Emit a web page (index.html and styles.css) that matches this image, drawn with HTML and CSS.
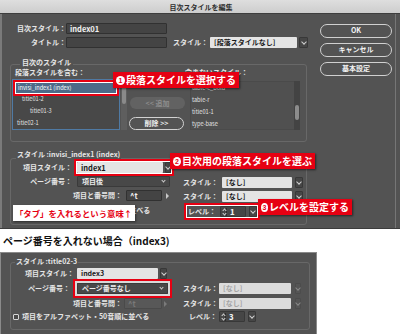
FILE: index.html
```html
<!DOCTYPE html>
<html lang="ja">
<head>
<meta charset="utf-8">
<link rel="stylesheet" href="styles.css">
</head>
<body>
<div class="dlg">
  <div class="titlebar">目次スタイルを編集</div>
  <div class="dbody">
    <div class="main">
      <div class="row r1">
        <span class="lbl lw54">目次スタイル：</span>
        <span class="inp iw101">index01</span>
      </div>
      <div class="row r2">
        <span class="lbl lw54">タイトル：</span>
        <span class="inp iw101"></span>
        <span class="lbl lw35 ml6">スタイル：</span>
        <span class="sel light sw87 ml2">[段落スタイルなし]</span>
        <span class="arr aw9 ml2"></span>
      </div>

      <div class="group g1">
        <span class="legend">目次のスタイル</span>
        <div class="lblrow">
          <span class="lbl incl">段落スタイルを含む：</span>
          <span class="lbl">含まないスタイル：</span>
        </div>
        <div class="lists">
          <div class="listwrap lwrap">
            <ul class="listbox">
              <li class="item selitem">invisi_index1 (index)</li>
              <li class="item ind2">title01-2</li>
              <li class="item ind3">title01-3</li>
              <li class="item ind1">title02-1</li>
            </ul>
            <div class="scroll ls"><div class="thumb lthumb"></div></div>
          </div>
          <div class="mid">
            <div class="btn dis">&lt;&lt; 追加</div>
            <div class="btn del">削除 &gt;&gt;</div>
          </div>
          <div class="listwrap rwrap">
            <ul class="rbox">
              <li class="item">table-c_bold</li>
              <li class="item">table-r</li>
              <li class="item">title01-1</li>
              <li class="item">type-base</li>
            </ul>
            <div class="scroll rs"><div class="thumb rthumb"></div></div>
          </div>
        </div>
      </div>

      <div class="group g2">
        <span class="legend leg2">スタイル :invisi_index1 (index)</span>
        <div class="gbody">
          <div class="lcol">
            <div class="row">
              <span class="lbl lw61">項目スタイル：</span>
              <span class="hl hl1 ml5">
                <span class="sel light sw86 bold">index1</span>
                <span class="arr aw6 ml2"></span>
              </span>
            </div>
            <div class="row mt3">
              <span class="lbl lw61">ページ番号：</span>
              <span class="sel dark sw93 ml5">項目後<i class="chev"></i></span>
            </div>
            <div class="row mt3">
              <span class="lbl lw111">項目と番号間：</span>
              <span class="inp iw36 ml4">^t</span>
              <span class="tri ml4"></span>
            </div>
            <div class="row mt4">
              <span class="cb ml3"></span>
              <span class="lbl ml3">項目をアルファベット・50音順に並べる</span>
            </div>
          </div>
          <div class="rcol">
            <div class="row">
              <span class="lbl lw35">スタイル：</span>
              <span class="sel light sw70 ml4">[なし]</span>
              <span class="arr aw8 ml3"></span>
            </div>
            <div class="row mt3">
              <span class="lbl lw35">スタイル：</span>
              <span class="sel light sw70 ml4">[なし]</span>
              <span class="arr aw8 ml3"></span>
            </div>
            <div class="row mt4">
              <span class="hl hl3 ml4">
                <span class="lbl lw29">レベル：</span>
                <span class="step ml4"><i class="updown"></i><b>1</b></span>
                <span class="arr aw8 ml3"></span>
              </span>
            </div>
          </div>
        </div>
      </div>
    </div>

    <div class="side">
      <div class="btn pill">OK</div>
      <div class="btn pill">キャンセル</div>
      <div class="btn pill">基本設定</div>
    </div>
  </div>

  <div class="callout c1"><span class="num">1</span>段落スタイルを選択する</div>
  <div class="callout c2"><span class="num">2</span>目次用の段落スタイルを選ぶ</div>
  <div class="callout c3"><span class="num">3</span>レベルを設定する</div>
  <div class="note">「タブ」を入れるという意味↑</div>
</div>

<div class="heading">ページ番号を入れない場合（index3)</div>

<div class="dlg2">
  <div class="group g3">
    <span class="legend leg3">スタイル :title02-3</span>
    <div class="gbody">
      <div class="lcol lcol3">
        <div class="row">
          <span class="lbl lw63">項目スタイル：</span>
          <span class="sel light sw81 ml3">index3</span>
          <span class="arr aw7 ml2"></span>
        </div>
        <div class="row mt4">
          <span class="lbl lw59">ページ番号：</span>
          <span class="hl hl2 ml7">
            <span class="sel dark sw91">ページ番号なし<i class="chev"></i></span>
          </span>
        </div>
        <div class="row mt4">
          <span class="lbl lw111">項目と番号間：</span>
          <span class="inp iw38 ml2 off">^t</span>
          <span class="tri ml2 offtri"></span>
        </div>
        <div class="row mt2">
          <span class="cb ml2"></span>
          <span class="lbl ml3">項目をアルファベット・50音順に並べる</span>
        </div>
      </div>
      <div class="rcol rcol3">
        <div class="row">
          <span class="lbl lw34">スタイル：</span>
          <span class="sel light sw72 ml2 off">[なし]</span>
          <span class="arr aw6 ml4 offarr"></span>
        </div>
        <div class="row mt4">
          <span class="lbl lw34">スタイル：</span>
          <span class="sel light sw72 ml2 off">[なし]</span>
          <span class="arr aw6 ml4 offarr"></span>
        </div>
        <div class="row mt2">
          <span class="lbl lw34">レベル：</span>
          <span class="step sw26 ml2"><i class="updown"></i><b>3</b></span>
          <span class="arr aw8 ml3"></span>
        </div>
      </div>
    </div>
  </div>
</div>
</body>
</html>
```

FILE: styles.css
```css
* { box-sizing: border-box; margin: 0; padding: 0; }
html, body { width: 400px; height: 334px; overflow: hidden; background: #fff; }
body {
  font-family: "Noto Sans CJK JP", "Noto Sans", sans-serif;
  color: #e8e8e8;
  font-size: 7px;
  line-height: 11px;
}
ul { list-style: none; }
i, b { font-style: normal; }

/* ===== top dialog ===== */
.dlg {
  position: relative;
  height: 229px;
  background: linear-gradient(to right, transparent 395px, #767676 395px, #767676 396px, transparent 396px), #535353;
  box-shadow: inset 2px 0 0 #7a7a7a;
  overflow: hidden;
  border-bottom: 1px solid #3c3c3c;
}
.titlebar {
  height: 14px;
  background: linear-gradient(#dedede, #cdcdcd);
  border-bottom: 1px solid #3e3e3e;
  color: #2e2e2e;
  font-weight: bold;
  font-size: 7px;
  line-height: 14px;
  text-align: center;
  padding-left: 2px;
}
.dbody { display: flex; }
.main { margin-left: 10px; width: 300px; }
.side { margin-left: 10px; width: 72px; padding-top: 10px; display: flex; flex-direction: column; gap: 5px; }

.row { display: flex; align-items: center; height: 11px; }
.r1 { margin-top: 9px; }
.r2 { margin-top: 3px; }
.mt2 { margin-top: 2px; }
.mt3 { margin-top: 3px; }
.mt4 { margin-top: 4px; }
.ml2 { margin-left: 2px; }
.ml3 { margin-left: 3px; }
.ml4 { margin-left: 4px; }
.ml5 { margin-left: 5px; }
.ml6 { margin-left: 6px; }
.ml7 { margin-left: 7px; }

.lbl { flex: none; text-align: right; white-space: nowrap; font-weight: bold; color: #e6e6e6; }
.lw29 { width: 29px; }
.lw34 { width: 34px; }
.lw35 { width: 35px; }
.lw54 { width: 56px; }
.lw59 { width: 59px; }
.lw61 { width: 61px; }
.lw63 { width: 63px; }
.lw111 { width: 111px; }

.inp {
  flex: none;
  height: 11px;
  background: #444;
  border: 1px solid #313131;
  border-radius: 1px;
  padding-left: 3px;
  color: #f2f2f2;
  font-size: 7.5px;
  line-height: 9px;
  font-weight: bold;
}
.iw101 { width: 101px; }
.iw36 { width: 36px; }
.iw38 { width: 38px; }
.inp.off { background: #585858; border-color: #4a4a4a; color: #7a7a7a; }

.sel {
  flex: none;
  position: relative;
  height: 11px;
  border-radius: 1px;
  padding-left: 4px;
  font-size: 7px;
  line-height: 11px;
  font-weight: bold;
  white-space: nowrap;
}
.sel.light { background: #e4e4e4; color: #1a1a1a; }
.sel.light.off { background: #dcdcdc; color: #a4a4a4; }
.sel.dark { background: #484848; border: 1px solid #3a3a3a; color: #ececec; line-height: 9px; }
.sw26 { width: 26px; }
.sw70 { width: 70px; }
.sw72 { width: 72px; }
.sw81 { width: 81px; }
.sw86 { width: 86px; }
.sw87 { width: 87px; }
.sw91 { width: 91px; }
.sw93 { width: 93px; }
.bold { font-size: 7.5px; }

.chev {
  position: absolute;
  right: 4px;
  top: 2px;
  width: 3px;
  height: 3px;
  border-right: 1px solid #cfcfcf;
  border-bottom: 1px solid #cfcfcf;
  transform: rotate(45deg);
}
.arr {
  flex: none;
  height: 11px;
  background: #464646;
  border: 1px solid #383838;
  border-radius: 1px;
  display: flex;
  align-items: center;
  justify-content: center;
}
.arr::after {
  content: "";
  width: 3px;
  height: 3px;
  margin-top: -2px;
  border-right: 1px solid #d0d0d0;
  border-bottom: 1px solid #d0d0d0;
  transform: rotate(45deg);
}
.aw6 { width: 6px; }
.aw7 { width: 7px; }
.aw8 { width: 8px; }
.aw9 { width: 9px; }
.offarr { background: #555; border-color: #4c4c4c; }
.offarr::after { border-color: #888; }

.tri {
  flex: none;
  width: 0; height: 0;
  border-top: 3px solid transparent;
  border-bottom: 3px solid transparent;
  border-left: 3px solid #c8c8c8;
}
.offtri { border-left-color: #7a7a7a; }

.cb { flex: none; width: 6px; height: 6px; border: 1px solid #d6d6d6; border-radius: 1px; background: #4a4a4a; }

.step {
  flex: none;
  display: flex;
  align-items: center;
  width: 26px;
  height: 11px;
  background: #464646;
  border: 1px solid #383838;
  border-radius: 1px;
  color: #f0f0f0;
  font-weight: bold;
  font-size: 7.5px;
  line-height: 9px;
}
.step b { margin-left: 3px; }
.updown {
  position: relative;
  width: 5px;
  height: 8px;
  margin-left: 1px;
  border-right: 1px solid #2d2d2d;
}
.updown::before, .updown::after {
  content: "";
  position: absolute;
  left: 1px;
  width: 2px;
  height: 2px;
  border-left: 1px solid #d0d0d0;
  border-top: 1px solid #d0d0d0;
}
.updown::before { top: 1px; transform: rotate(45deg); }
.updown::after { top: 4px; transform: rotate(225deg); }

/* highlight frames */
.hl { display: flex; align-items: center; flex: none; }
.hl1, .hl3 {
  outline: 2px solid #e60012;
  outline-offset: 1px;
  box-shadow: 0 0 0 1px #ffffff;
}
.hl2 {
  outline: 2px solid #e60012;
  outline-offset: 2px;
  box-shadow: 0 0 0 2px #d9d9d9;
}

/* groups */
.group { border: 1px solid #686868; border-radius: 3px; }
.legend {
  display: block;
  width: max-content;
  margin-top: -7px;
  margin-left: 9px;
  padding: 0 2px;
  background: #535353;
  line-height: 9px;
  font-weight: bold;
  color: #e6e6e6;
}
.g1 { margin-top: 16px; width: 297px; height: 78px; }
.lblrow { display: flex; margin-top: 1px; height: 9px; line-height: 9px; }
.incl { width: 174px; padding-left: 4px; text-align: left; }

.lists { display: flex; margin-top: 2px; height: 51px; }
.listwrap { display: flex; flex: none; }
.lwrap { margin-left: 1px; }
.listbox {
  width: 108px;
  height: 51px;
  background: #484848;
  border: 1px solid #4f7aa4;
  padding-top: 1px;
}
.item {
  height: 12px;
  line-height: 12px;
  font-size: 5.6px;
  color: #e2e2e2;
  padding-left: 3px;
  white-space: nowrap;
}
.selitem {
  margin: 1px 2px -1px 2px;
  background: #4d6a88;
  color: #fff;
  outline: 2px solid #e60012;
  outline-offset: 0px;
  box-shadow: inset 0 0 0 1px #fff;
  padding-left: 3px;
}
.ind1 { padding-left: 4px; }
.ind2 { padding-left: 9px; }
.ind3 { padding-left: 17px; }
.scroll { width: 6px; background: #5e5e5e; margin-left: 1px; padding: 1px; }
.thumb { background: #8a8a8a; border-radius: 2px; }
.lthumb { height: 24px; }
.mid { flex: none; margin-left: 2px; width: 56px; padding-top: 18px; }
.btn { text-align: center; font-weight: bold; white-space: nowrap; }
.dis {
  width: 55px; margin-left: 1px;
  height: 12px; line-height: 12px;
  background: #626262; border-radius: 6px;
  color: #8e8e8e;
}
.del {
  margin-top: 8px;
  width: 55px;
  height: 13px; line-height: 10px;
  border: 1.5px solid #d2d2d2;
  border-radius: 7px;
  color: #f0f0f0;
}
.rwrap { margin-left: 5px; margin-top: 2px; height: 49px; }
.rbox {
  width: 104px;
  height: 49px;
  background: #505050;
  border: 1px solid #4a4a4a;
  border-right: none;
}
.rbox .item { padding-left: 1px; }
.rs { background: #434343; margin-left: 0; padding-top: 24px; }
.rthumb { height: 15px; background: #8c8c8c; }

.g2 { margin-top: 16px; width: 297px; height: 67px; }
.leg2 { margin-top: -9px; margin-left: 5px; padding: 0 1px; }
.gbody { display: flex; }
.lcol { width: 172px; padding-top: 3px; flex: none; }
.rcol { padding-top: 18px; flex: none; }

.pill {
  height: 14px;
  line-height: 11px;
  border: 1.5px solid #d0d0d0;
  border-radius: 8px;
  color: #f2f2f2;
  font-size: 7px;
}

/* callouts */
.callout {
  position: absolute;
  height: 16px;
  display: flex;
  align-items: center;
  padding: 0 3px;
  background: #e60012;
  color: #fff;
  font-weight: bold;
  font-size: 10px;
  line-height: 16px;
  white-space: nowrap;
  box-shadow: 1px 1px 2px rgba(0,0,0,0.55);
}
.num {
  display: inline-flex;
  align-items: center;
  justify-content: center;
  width: 9px;
  height: 9px;
  margin-right: 1px;
  border-radius: 50%;
  background: #fff;
  color: #e60012;
  font-size: 7px;
  font-weight: 900;
  line-height: 9px;
  font-family: "Liberation Sans", sans-serif;
}
.c1 { left: 113px; top: 72px; width: 126px; }
.c2 { left: 170px; top: 153px; width: 145px; }
.c3 { left: 258px; top: 199px; width: 94px; }
.note {
  position: absolute;
  left: 13px;
  top: 205px;
  width: 122px;
  height: 16px;
  background: #fff;
  color: #e60012;
  font-weight: bold;
  font-size: 8.4px;
  line-height: 16px;
  padding-left: 2px;
  white-space: nowrap;
  box-shadow: 1px 1px 2px rgba(0,0,0,0.45);
}

/* ===== heading ===== */
.heading {
  height: 23px;
  padding-left: 3px;
  color: #111;
  font-weight: bold;
  font-size: 10px;
  line-height: 24px;
}

/* ===== second dialog ===== */
.dlg2 {
  width: 317px;
  height: 82px;
  background: #535353;
  border: 1px solid #8a8a8a;
  border-bottom: none;
  padding: 9px 0 0 9px;
}
.g3 { width: 300px; height: 68px; }
.leg3 { margin-top: -6px; margin-left: 4px; padding: 0 1px; }
.lcol3 { padding-top: 2px; }
.rcol3 { padding-top: 17px; }
```
